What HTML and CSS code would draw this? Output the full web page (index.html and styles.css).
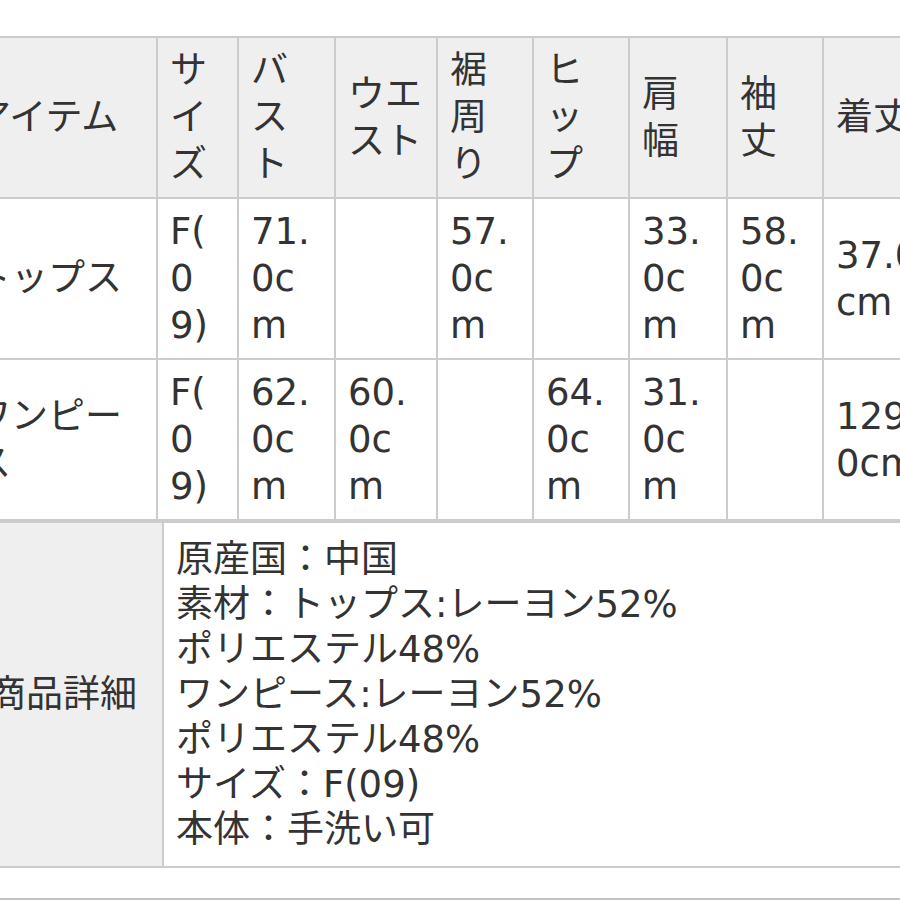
FILE: index.html
```html
<!DOCTYPE html>
<html lang="ja">
<head>
<meta charset="utf-8">
<title>サイズ表</title>
<link rel="stylesheet" href="styles.css">
</head>
<body>
<main class="sheet">
  <table class="spec">
    <colgroup>
      <col class="c-item"><col class="c-size"><col class="c-bust"><col class="c-waist"><col class="c-hem"><col class="c-hip"><col class="c-shoulder"><col class="c-sleeve"><col class="c-length">
    </colgroup>
    <thead>
      <tr>
        <th class="item">アイテム</th>
        <th>サイズ</th>
        <th>バスト</th>
        <th>ウエスト</th>
        <th>裾周り</th>
        <th>ヒップ</th>
        <th>肩幅</th>
        <th>袖丈</th>
        <th>着丈</th>
      </tr>
    </thead>
    <tbody>
      <tr>
        <td class="item">トップス</td>
        <td class="size">F(09)</td>
        <td>71.0cm</td>
        <td></td>
        <td>57.0cm</td>
        <td></td>
        <td>33.0cm</td>
        <td>58.0cm</td>
        <td>37.0cm</td>
      </tr>
      <tr>
        <td class="item">ワンピース</td>
        <td class="size">F(09)</td>
        <td>62.0cm</td>
        <td>60.0cm</td>
        <td></td>
        <td>64.0cm</td>
        <td>31.0cm</td>
        <td></td>
        <td>129.0cm</td>
      </tr>
    </tbody>
  </table>

  <table class="detail">
    <colgroup><col class="c-label"><col class="c-body"></colgroup>
    <tbody>
      <tr>
        <th>商品詳細</th>
        <td>
          <span class="line">原産国：中国</span>
          <span class="line">素材：トップス:レーヨン52%</span>
          <span class="line">ポリエステル48%</span>
          <span class="line">ワンピース:レーヨン52%</span>
          <span class="line">ポリエステル48%</span>
          <span class="line">サイズ：F(09)</span>
          <span class="line">本体：手洗い可</span>
        </td>
      </tr>
    </tbody>
  </table>

  <div class="next"></div>
</main>
</body>
</html>
```

FILE: styles.css
```css
html, body {
  margin: 0;
  padding: 0;
  overflow: hidden;
  background: #ffffff;
}

body {
  font-family: "DejaVu Sans", "Noto Sans CJK JP", sans-serif;
  font-size: 37px;
  color: #333333;
}

.sheet {
  padding-top: 36px;
}

table {
  border-collapse: collapse;
  table-layout: fixed;
}

th, td {
  border: 2px solid #cccccc;
  text-align: left;
  vertical-align: middle;
  font-weight: normal;
}

/* size table */
.spec {
  width: 885px;
  margin-left: -43px;
}
.c-item { width: 199px; }
.c-size { width: 81px; }
.c-bust { width: 97px; }
.c-waist { width: 102px; }
.c-hem { width: 96px; }
.c-hip { width: 96px; }
.c-shoulder { width: 98px; }
.c-sleeve { width: 96px; }
.c-length { width: 120px; }

.spec th,
.spec td {
  padding: 9px 11px 9px 12px;
  line-height: 47px;
  word-break: break-all;
}

.spec .item {
  padding-left: 15px;
}

.spec td.size {
  padding-right: 22px;
  line-break: anywhere;
}

.spec thead th {
  background: #efefef;
}

.spec td {
  background: #ffffff;
}

/* detail table */
.detail {
  width: 960px;
  margin-left: -27px;
}
.c-label { width: 189px; }
.c-body { width: 771px; }

.detail th,
.detail td {
  padding: 14px 10px 14px 12px;
  line-height: 45px;
}

.detail th {
  padding-left: 14px;
  background: #efefef;
}

.line {
  display: block;
}

.next {
  margin-top: 30px;
  border-top: 2px solid #c4c4c4;
  height: 20px;
}
```
